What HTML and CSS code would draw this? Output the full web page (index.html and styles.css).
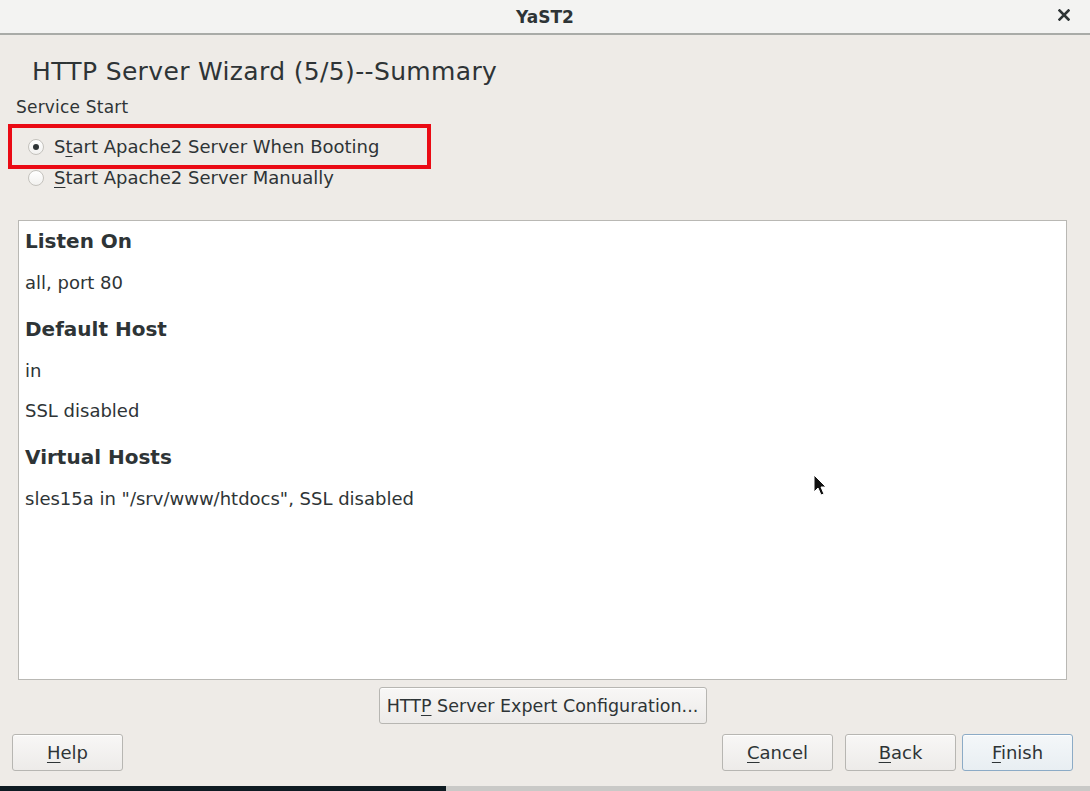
FILE: index.html
```html
<!DOCTYPE html>
<html lang="en">
<head>
    <meta charset="UTF-8">
    <title>YaST2</title>
    <link rel="stylesheet" href="styles.css">
</head>
<body>
    <div class="window">
        <div class="titlebar">
            <span class="title">YaST2</span>
            <svg class="close" width="12" height="12" viewBox="0 0 12 12">
                <path d="M1.5 1.5 L10.5 10.5 M10.5 1.5 L1.5 10.5" stroke="#2e3436" stroke-width="2.6" stroke-linecap="square"/>
            </svg>
        </div>

        <div class="dialog">
            <h1>HTTP Server Wizard (5/5)--Summary</h1>

            <div class="frame-label">Service Start</div>
            <div class="highlight">
                <label class="radio"><span class="dot checked"></span>S<u>t</u>art Apache2 Server When Booting</label>
            </div>
            <label class="radio second"><span class="dot"></span><u>S</u>tart Apache2 Server Manually</label>

            <div class="summary">
                <h3>Listen On</h3>
                <p>all, port 80</p>
                <h3>Default Host</h3>
                <p>in</p>
                <p>SSL disabled</p>
                <h3>Virtual Hosts</h3>
                <p>sles15a in "/srv/www/htdocs", SSL disabled</p>
                <svg class="cursor" width="16" height="24" viewBox="0 0 16 24">
                    <path d="M1 1 L1 18 L5 14 L8 21 L11 20 L8 13 L13 13 Z" fill="#111" stroke="#fff" stroke-width="1"/>
                </svg>
            </div>

            <div class="expert-row">
                <button class="btn expert">HTT<u>P</u> Server Expert Configuration...</button>
            </div>

            <div class="button-bar">
                <button class="btn"><u>H</u>elp</button>
                <div class="spacer"></div>
                <button class="btn"><u>C</u>ancel</button>
                <button class="btn"><u>B</u>ack</button>
                <button class="btn default"><u>F</u>inish</button>
            </div>
        </div>

        <div class="taskbar">
            <div class="taskbar-dark"></div>
        </div>
    </div>
</body>
</html>
```

FILE: styles.css
```css
html, body {
    margin: 0;
    padding: 0;
}

body {
    font-family: 'DejaVu Sans', 'Noto Sans', sans-serif;
    color: #2e3436;
    background-color: #eeebe7;
    width: 1090px;
    height: 791px;
    overflow: hidden;
}

.window {
    display: flex;
    flex-direction: column;
    height: 791px;
}

.titlebar {
    height: 35px;
    background: #f3f3f2;
    border-bottom: 2px solid #a9aba8;
    display: flex;
    align-items: center;
    justify-content: center;
    position: relative;
}

.title {
    font-size: 17px;
    font-weight: bold;
    color: #2e3436;
}

.close {
    position: absolute;
    right: 20px;
    top: 9px;
}

.dialog {
    flex: 1;
    padding: 0 23px 0 12px;
    display: flex;
    flex-direction: column;
}

h1 {
    font-size: 25px;
    font-weight: normal;
    margin: 22px 0 0 20px;
    line-height: 30px;
    letter-spacing: 0.35px;
}

.frame-label {
    font-size: 17px;
    margin: 9px 0 0 4px;
    line-height: 22px;
    letter-spacing: 0.2px;
}

.highlight {
    width: 415px;
    height: 37px;
    border: 4px solid #ea0a14;
    margin: 6px 0 0 -4px;
    display: flex;
    align-items: center;
}

.radio {
    display: flex;
    align-items: center;
    font-size: 18px;
    line-height: 22px;
}

.highlight .radio {
    margin-left: 16px;
}

.radio.second {
    margin: -2px 0 0 16px;
}

.radio u {
    text-decoration-thickness: 1px;
    text-underline-offset: 3px;
}

.dot {
    width: 14px;
    height: 14px;
    border: 1px solid #c4c2bd;
    border-radius: 50%;
    background: linear-gradient(#ffffff, #f2f1ef);
    margin-right: 10px;
    box-sizing: content-box;
    position: relative;
}

.dot.checked::after {
    content: '';
    position: absolute;
    left: 4px;
    top: 4px;
    width: 6px;
    height: 6px;
    border-radius: 50%;
    background: #2e3436;
}

.summary {
    margin: 31px 0 0 6px;
    height: 460px;
    background: #ffffff;
    border: 1px solid #b9b8b4;
    padding: 6px 6px;
    box-sizing: border-box;
    position: relative;
}

.summary h3 {
    font-size: 20px;
    font-weight: bold;
    margin: 0;
    line-height: 28px;
}

.summary p {
    font-size: 18px;
    margin: 0;
    line-height: 22px;
}

.summary h3 + p {
    margin-top: 17px;
}

.summary p + h3 {
    margin-top: 21px;
}

.summary p + p {
    margin-top: 18px;
}

.cursor {
    position: absolute;
    left: 794px;
    top: 253px;
}

.expert-row {
    display: flex;
    justify-content: center;
    margin-top: 7px;
    padding-left: 6px;
}

.btn {
    font-family: 'DejaVu Sans', 'Noto Sans', sans-serif;
    font-size: 18px;
    color: #2e3436;
    background: linear-gradient(#f8f7f6, #edebe9);
    border: 1px solid #b7b6b2;
    border-radius: 3px;
    height: 37px;
    padding: 0 4px;
    white-space: nowrap;
    box-shadow: 0 1px 0 rgba(255,255,255,0.8) inset;
}

.btn.expert {
    width: 328px;
    padding: 0;
    font-size: 17.5px;
}

.btn u {
    text-decoration-thickness: 1px;
    text-underline-offset: 3px;
}

.button-bar {
    display: flex;
    margin-top: 10px;
    gap: 12px;
    margin-right: -6px;
}

.button-bar .btn {
    width: 111px;
}

.button-bar .btn.default {
    margin-left: -6px;
    border-color: #8cabc6;
    background: linear-gradient(#f4f7f9, #e8eef2);
}

.spacer {
    flex: 1;
}

.taskbar {
    margin-top: 15px;
    height: 5px;
    background: #c9c9c7;
}

.taskbar-dark {
    width: 446px;
    height: 5px;
    background: #0e1b22;
}
```
